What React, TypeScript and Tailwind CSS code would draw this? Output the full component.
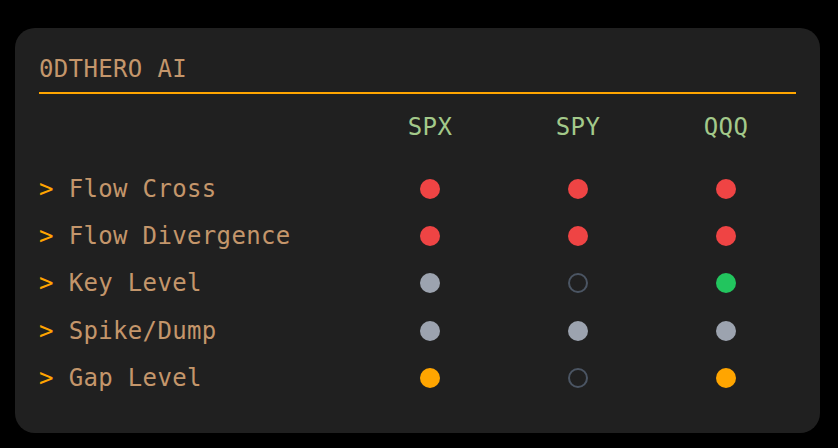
import React from 'react';

type Dot = 'red' | 'gray' | 'green' | 'orange' | 'empty';

const symbols = ['SPX', 'SPY', 'QQQ'];

const signals: { label: string; dots: Dot[] }[] = [
    { label: 'Flow Cross', dots: ['red', 'red', 'red'] },
    { label: 'Flow Divergence', dots: ['red', 'red', 'red'] },
    { label: 'Key Level', dots: ['gray', 'empty', 'green'] },
    { label: 'Spike/Dump', dots: ['gray', 'gray', 'gray'] },
    { label: 'Gap Level', dots: ['orange', 'empty', 'orange'] },
];

const dotClass: { [key in Dot]: string } = {
    red: 'bg-[#ef4444]',
    gray: 'bg-[#9ca3af]',
    green: 'bg-[#22c55e]',
    orange: 'bg-[#ffa500]',
    empty: 'border-2 border-[#4b5563]',
};

const App: React.FC = () => {
    return (
        <div className="w-[838px] h-[448px] bg-black pt-[28px] pl-[15px]">
            <div
                className="w-[805px] h-[405px] bg-[#202020] rounded-[20px] px-6 pt-[25px] text-[24px] leading-[32px] tracking-[0.35px]"
                style={{ fontFamily: '"DejaVu Sans Mono", "Liberation Mono", monospace' }}
            >
                <h1 className="text-[#c4966b] pb-[7px] border-b-2 border-[#ffa500]">0DTHERO AI</h1>

                <div className="grid grid-cols-[317px_148px_148px_148px] mt-[17px]">
                    <div />
                    {symbols.map(sym => (
                        <div key={sym} className="text-center text-[#a3c98a]">{sym}</div>
                    ))}
                </div>

                <div className="mt-[22px]">
                    {signals.map(row => (
                        <div key={row.label} className="grid grid-cols-[317px_148px_148px_148px] h-[47.3px] items-center">
                            <div className="text-[#c4966b] whitespace-pre">
                                <span className="text-[#ffa500]">&gt;</span> {row.label}
                            </div>
                            {row.dots.map((d, i) => (
                                <div key={i} className="flex justify-center">
                                    <span className={`block w-5 h-5 rounded-full ${dotClass[d]}`} />
                                </div>
                            ))}
                        </div>
                    ))}
                </div>
            </div>
        </div>
    );
};

export default App;
